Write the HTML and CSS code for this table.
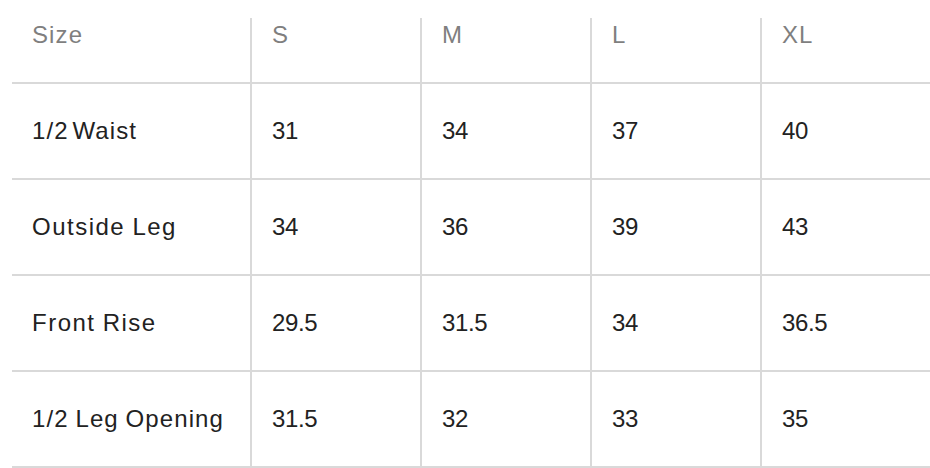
FILE: index.html
```html
<!DOCTYPE html>
<html lang="en">
<head>
<meta charset="utf-8">
<title>Size chart</title>
<link rel="stylesheet" href="styles.css">
</head>
<body>
<div class="chart">
  <div class="cell head">Size</div>
  <div class="cell head col">S</div>
  <div class="cell head col">M</div>
  <div class="cell head col">L</div>
  <div class="cell head col">XL</div>

  <div class="cell label tight">1/2 Waist</div>
  <div class="cell col num">31</div>
  <div class="cell col num">34</div>
  <div class="cell col num">37</div>
  <div class="cell col num">40</div>

  <div class="cell label">Outside Leg</div>
  <div class="cell col num">34</div>
  <div class="cell col num">36</div>
  <div class="cell col num">39</div>
  <div class="cell col num">43</div>

  <div class="cell label">Front Rise</div>
  <div class="cell col num">29.5</div>
  <div class="cell col num">31.5</div>
  <div class="cell col num">34</div>
  <div class="cell col num">36.5</div>

  <div class="cell label narrow">1/2 Leg Opening</div>
  <div class="cell col num">31.5</div>
  <div class="cell col num">32</div>
  <div class="cell col num">33</div>
  <div class="cell col num">35</div>
</div>
</body>
</html>
```

FILE: styles.css
```css
html, body {
  margin: 0;
  padding: 0;
  background: #ffffff;
}

.chart {
  margin: 18px 0 0 12px;
  display: grid;
  grid-template-columns: 238px repeat(4, 170px);
  grid-template-rows: 66px repeat(4, 96px);
  font-family: "Liberation Sans", Arial, sans-serif;
  font-size: 24px;
  letter-spacing: 1.1px;
  word-spacing: -1px;
  color: #222222;
}

.cell {
  box-sizing: border-box;
  border-bottom: 2px solid #d9d9d9;
  padding-left: 20px;
  display: flex;
  align-items: center;
  line-height: 26px;
  white-space: nowrap;
}

.cell.col {
  border-left: 2px solid #d9d9d9;
}

.cell.label {
  letter-spacing: 1.5px;
}

.cell.tight {
  letter-spacing: 1.1px;
  word-spacing: -4px;
}

.cell.narrow {
  letter-spacing: 1.1px;
}

.cell.num {
  letter-spacing: -0.4px;
}

.cell.head {
  align-items: flex-start;
  padding-top: 4px;
  color: #7f7f7f;
}
```
